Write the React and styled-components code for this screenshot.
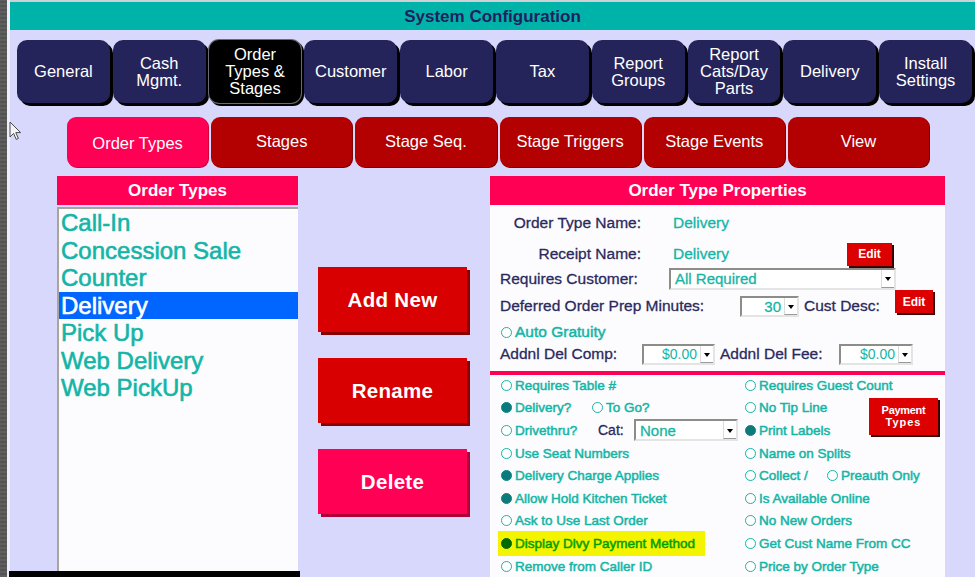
import React from 'react';
import styled, { createGlobalStyle } from 'styled-components';

const GlobalStyle = createGlobalStyle`
  html, body {
    margin: 0;
    padding: 0;
  }
  body {
    background: #d8d8fc;
    font-family: "Liberation Sans", Arial, sans-serif;
    overflow: hidden;
  }
`;

const TEAL = '#14b5a6';
const NAVY = '#2a2a5c';
const PINK = '#ff0055';

const Screen = styled.div`
  position: relative;
  display: flex;
  width: 975px;
  height: 577px;
  overflow: hidden;
  background: #d8d8fc;
`;

const SideStrip = styled.div`
  width: 7px;
  flex-shrink: 0;
  background: repeating-linear-gradient(0deg, #5f5f5f 0 2px, #545454 2px 4px);
  border-right: 3px solid #eeeeff;
`;

const Main = styled.div`
  flex: 1;
  display: flex;
  flex-direction: column;
  min-width: 0;
`;

const TitleBar = styled.div`
  height: 28px;
  box-sizing: border-box;
  padding-top: 3px;
  border-top: 2px solid #cfcfd6;
  background: #00b3a8;
  color: #1f2060;
  font-size: 17px;
  font-weight: 700;
  line-height: 23px;
  text-align: center;
  height: 30px;
`;

const NavRow = styled.div`
  display: flex;
  gap: 3px;
  margin: 10px 3px 0 7px;
`;

const NavButton = styled.div`
  flex: 1;
  height: 63px;
  display: flex;
  align-items: center;
  justify-content: center;
  text-align: center;
  border-radius: 10px;
  background: ${p => (p.$active ? '#000' : '#25245a')};
  box-shadow: ${p => (p.$active ? '0 0 0 1px #6a6a70, 2px 2px 0 1px #000' : '3px 3px 0 #000')};
  color: #fff;
  font-size: 16.5px;
  line-height: 17px;
`;

const TabRow = styled.div`
  display: flex;
  gap: 3px;
  width: 862px;
  margin: 14px 0 0 57px;
`;

const Tab = styled.div`
  flex: 1;
  height: 50px;
  display: flex;
  align-items: center;
  justify-content: center;
  padding: ${p => (p.$active ? '3px 0 0' : '0 0 2px')};
  box-sizing: border-box;
  border-radius: 9px;
  background: ${p => (p.$active ? PINK : '#b30000')};
  box-shadow: 1px 1px 0 ${p => (p.$active ? '#d0003c' : '#800000')};
  color: #fff;
  font-size: 16.5px;
`;

const Content = styled.div`
  flex: 1;
  display: flex;
  margin-top: 9px;
  padding-left: 47px;
  min-height: 0;
`;

const LeftCol = styled.div`
  width: 241px;
  display: flex;
  flex-direction: column;
`;

const PanelHeader = styled.div`
  height: 29px;
  flex-shrink: 0;
  background: ${PINK};
  color: #fff;
  font-size: 17px;
  font-weight: 700;
  line-height: 29px;
  text-align: center;
`;

const ListBox = styled.div`
  flex: 1;
  margin-top: 2px;
  background: #fcfcff;
  border-top: 2px solid #a6a69e;
  border-left: 2px solid #a6a69e;
`;

const ListItem = styled.div`
  height: 27.5px;
  line-height: 27.5px;
  padding-left: 2px;
  font-size: 24px;
  color: ${p => (p.$selected ? '#fff' : TEAL)};
  -webkit-text-stroke: 0.6px ${p => (p.$selected ? '#fff' : TEAL)};
  background: ${p => (p.$selected ? '#0066ff' : 'transparent')};
  white-space: nowrap;
`;

const BottomBar = styled.div`
  height: 6px;
  flex-shrink: 0;
  width: 291px;
  margin-left: -48px;
  background: #000;
`;

const MidCol = styled.div`
  display: flex;
  flex-direction: column;
  gap: 26px;
  margin-left: 20px;
  padding-top: 91px;
`;

const ActionButton = styled.div`
  width: 149px;
  height: 65px;
  display: flex;
  align-items: center;
  justify-content: center;
  background: ${p => (p.$pink ? PINK : '#d80000')};
  box-shadow: 3px 3px 0 ${p => (p.$pink ? '#b0003a' : '#8a0000')};
  color: #fff;
  font-size: 20.5px;
  font-weight: 700;
  letter-spacing: 0.3px;
`;

const RightPanel = styled.div`
  width: 455px;
  margin-left: 23px;
  display: flex;
  flex-direction: column;
`;

const PropsBody = styled.div`
  flex: 1;
  display: flex;
  flex-direction: column;
  background: #fcfcff;
`;

const TopSection = styled.div`
  padding: 8px 0 0 10px;
`;

const Row = styled.div`
  display: flex;
  align-items: center;
  height: ${p => p.$h}px;
  margin-top: ${p => p.$mt || 0}px;
`;

const Label = styled.div`
  width: ${p => p.$w}px;
  flex-shrink: 0;
  margin-left: ${p => p.$ml || 0}px;
  text-align: ${p => (p.$right ? 'right' : 'left')};
  color: ${NAVY};
  font-size: 15.5px;
  -webkit-text-stroke: 0.3px ${NAVY};
  white-space: nowrap;
`;

const Value = styled.div`
  width: ${p => (p.$w ? `${p.$w}px` : 'auto')};
  margin-left: ${p => p.$ml || 0}px;
  color: ${TEAL};
  font-size: 15.5px;
  -webkit-text-stroke: 0.3px ${TEAL};
`;

const EditButton = styled.div`
  width: ${p => p.$w}px;
  height: 23px;
  flex-shrink: 0;
  align-self: ${p => (p.$top ? 'flex-start' : 'center')};
  display: flex;
  align-items: center;
  justify-content: center;
  background: #dc0000;
  box-shadow: 2px 2px 0 #3a0000;
  color: #fff;
  font-size: 12px;
  font-weight: 700;
`;

const SelectBox = styled.div`
  width: ${p => p.$w}px;
  height: ${p => p.$h || 21}px;
  flex-shrink: 0;
  box-sizing: border-box;
  display: flex;
  align-items: center;
  background: #fff;
  border: 2px solid;
  border-color: #8c8c88 #e4e4e4 #e4e4e4 #8c8c88;
`;

const SelectText = styled.div`
  flex: 1;
  padding: 0 3px 0 4px;
  text-align: ${p => (p.$right ? 'right' : 'left')};
  color: ${TEAL};
  font-size: ${p => p.$size || 15}px;
  -webkit-text-stroke: ${p => (p.$thin ? 0 : 0.3)}px ${TEAL};
  white-space: nowrap;
  overflow: hidden;
`;

const SelectArrow = styled.div`
  position: relative;
  width: 12px;
  align-self: stretch;
  border-left: 1px solid #dcdcdc;
  border-bottom: 1px solid #9a9a9a;

  &::after {
    content: '';
    position: absolute;
    left: 3px;
    top: 50%;
    margin-top: -1px;
    border-left: 3px solid transparent;
    border-right: 3px solid transparent;
    border-top: 4px solid #000;
  }
`;

const Separator = styled.div`
  height: 4px;
  margin-top: 6px;
  background: ${PINK};
`;

const OptionGrid = styled.div`
  display: grid;
  grid-template-columns: 244px 123px 69px;
  grid-auto-rows: 22.6px;
  margin-top: -1px;
  padding-left: 12px;
`;

const Cell = styled.div`
  grid-column: ${p => p.$col};
  display: flex;
  align-items: center;
  white-space: nowrap;
`;

const RadioItem = styled.div`
  display: flex;
  align-items: center;
  width: ${p => (p.$w ? `${p.$w}px` : 'auto')};
  flex-shrink: 0;
  color: ${TEAL};
  font-size: ${p => p.$size || 13.5}px;
  -webkit-text-stroke: 0.5px ${TEAL};
  white-space: nowrap;
`;

const Radio = styled.span`
  width: 11px;
  height: 11px;
  box-sizing: border-box;
  flex-shrink: 0;
  margin-right: 3px;
  margin-left: -1px;
  border-radius: 50%;
  border: 1.5px solid ${p => (p.$on ? '#0a8686' : TEAL)};
  background: ${p => (p.$on ? '#0b7a7a' : '#fff')};
`;

const Highlight = styled.div`
  display: flex;
  align-items: center;
  height: 25px;
  margin-left: -4px;
  padding: 0 10px 0 4px;
  background: #f4f400;
  color: #00a000;
  font-size: 13.5px;
  -webkit-text-stroke: 0.5px #00a000;
`;

const GreenRadio = styled(Radio)`
  border-color: #006a00;
  background: #006a00;
`;

const CatLabel = styled.div`
  width: 36px;
  flex-shrink: 0;
  color: ${NAVY};
  font-size: 14px;
  -webkit-text-stroke: 0.3px ${NAVY};
`;

const PaymentButton = styled.div`
  grid-column: 3;
  grid-row: 2 / span 2;
  align-self: start;
  margin-top: 1px;
  height: 37px;
  display: flex;
  flex-direction: column;
  align-items: center;
  justify-content: center;
  background: #dc0000;
  box-shadow: 2px 2px 0 #3a0000;
  color: #fff;
  font-size: 11px;
  font-weight: 700;
  line-height: 12px;
  letter-spacing: -0.3px;
`;

const Cursor = styled.svg`
  position: absolute;
  left: 9px;
  top: 121px;
`;

const navItems = [
  ['General'],
  ['Cash', 'Mgmt.'],
  ['Order', 'Types &', 'Stages'],
  ['Customer'],
  ['Labor'],
  ['Tax'],
  ['Report', 'Groups'],
  ['Report', 'Cats/Day', 'Parts'],
  ['Delivery'],
  ['Install', 'Settings'],
];

const tabs = ['Order Types', 'Stages', 'Stage Seq.', 'Stage Triggers', 'Stage Events', 'View'];

const orderTypes = ['Call-In', 'Concession Sale', 'Counter', 'Delivery', 'Pick Up', 'Web Delivery', 'Web PickUp'];

const Select = ({ w, h, text, right, size, thin }) => (
  <SelectBox $w={w} $h={h}>
    <SelectText $right={right} $size={size} $thin={thin}>{text}</SelectText>
    <SelectArrow />
  </SelectBox>
);

const Option = ({ on, w, children }) => (
  <RadioItem $w={w}>
    <Radio $on={on} />
    {children}
  </RadioItem>
);

export default function App() {
  return (
    <>
      <GlobalStyle />
      <Screen>
        <SideStrip />
        <Main>
          <TitleBar>System Configuration</TitleBar>
          <NavRow>
            {navItems.map((lines, i) => (
              <NavButton key={i} $active={i === 2}>
                <div>
                  {lines.map(l => (
                    <div key={l}>{l}</div>
                  ))}
                </div>
              </NavButton>
            ))}
          </NavRow>
          <TabRow>
            {tabs.map((t, i) => (
              <Tab key={t} $active={i === 0}>{t}</Tab>
            ))}
          </TabRow>
          <Content>
            <LeftCol>
              <PanelHeader>Order Types</PanelHeader>
              <ListBox>
                {orderTypes.map(t => (
                  <ListItem key={t} $selected={t === 'Delivery'}>{t}</ListItem>
                ))}
              </ListBox>
              <BottomBar />
            </LeftCol>
            <MidCol>
              <ActionButton>Add New</ActionButton>
              <ActionButton>Rename</ActionButton>
              <ActionButton $pink>Delete</ActionButton>
            </MidCol>
            <RightPanel>
              <PanelHeader>Order Type Properties</PanelHeader>
              <PropsBody>
                <TopSection>
                  <Row $h={20}>
                    <Label $w={141} $right>Order Type Name:</Label>
                    <Value $ml={32}>Delivery</Value>
                  </Row>
                  <Row $h={24} $mt={9}>
                    <Label $w={141} $right>Receipt Name:</Label>
                    <Value $ml={32} $w={174}>Delivery</Value>
                    <EditButton $w={45}>Edit</EditButton>
                  </Row>
                  <Row $h={23} $mt={1}>
                    <Label $w={169}>Requires Customer:</Label>
                    <Select w={227} h={22} text="All Required" />
                  </Row>
                  <Row $h={32}>
                    <Label $w={240}>Deferred Order Prep Minutes:</Label>
                    <Select w={59} h={21} text="30" right />
                    <Label $w={91} $ml={5}>Cust Desc:</Label>
                    <EditButton $w={38} $top>Edit</EditButton>
                  </Row>
                  <Row $h={20}>
                    <RadioItem $size={15.5} style={{ marginLeft: 2 }}>
                      <Radio />
                      Auto Gratuity
                    </RadioItem>
                  </Row>
                  <Row $h={22} $mt={1}>
                    <Label $w={142}>Addnl Del Comp:</Label>
                    <Select w={73} h={21} text="$0.00" right size={14} thin />
                    <Label $w={119} $ml={5}>Addnl Del Fee:</Label>
                    <Select w={74} h={21} text="$0.00" right size={14} thin />
                  </Row>
                </TopSection>
                <Separator />
                <OptionGrid>
                  <PaymentButton>
                    <span>Payment</span>
                    <span style={{ letterSpacing: '1px' }}>Types</span>
                  </PaymentButton>

                  <Cell $col={1}><Option>Requires Table #</Option></Cell>
                  <Cell $col={2}><Option>Requires Guest Count</Option></Cell>

                  <Cell $col={1}>
                    <Option on w={91}>Delivery?</Option>
                    <Option>To Go?</Option>
                  </Cell>
                  <Cell $col={2}><Option>No Tip Line</Option></Cell>

                  <Cell $col={1}>
                    <Option w={96}>Drivethru?</Option>
                    <CatLabel>Cat:</CatLabel>
                    <Select w={104} h={22} text="None" />
                  </Cell>
                  <Cell $col={2}><Option on>Print Labels</Option></Cell>

                  <Cell $col={1}><Option>Use Seat Numbers</Option></Cell>
                  <Cell $col={2}><Option>Name on Splits</Option></Cell>

                  <Cell $col={1}><Option on>Delivery Charge Applies</Option></Cell>
                  <Cell $col={2}>
                    <Option w={82}>Collect /</Option>
                    <Option>Preauth Only</Option>
                  </Cell>

                  <Cell $col={1}><Option on>Allow Hold Kitchen Ticket</Option></Cell>
                  <Cell $col={2}><Option>Is Available Online</Option></Cell>

                  <Cell $col={1}><Option>Ask to Use Last Order</Option></Cell>
                  <Cell $col={2}><Option>No New Orders</Option></Cell>

                  <Cell $col={1}>
                    <Highlight>
                      <GreenRadio $on />
                      Display Dlvy Payment Method
                    </Highlight>
                  </Cell>
                  <Cell $col={2}><Option>Get Cust Name From CC</Option></Cell>

                  <Cell $col={1}><Option>Remove from Caller ID</Option></Cell>
                  <Cell $col={2}><Option>Price by Order Type</Option></Cell>
                </OptionGrid>
              </PropsBody>
            </RightPanel>
          </Content>
        </Main>
        <Cursor width="13" height="20" viewBox="0 0 13 20">
          <path
            d="M1 1 L1 16 L4.6 12.4 L7.2 18.4 L9.4 17.4 L6.8 11.6 L11.6 11.6 Z"
            fill="#f4f4f4"
            stroke="#4a4a4a"
            strokeWidth="1"
            strokeLinejoin="round"
          />
        </Cursor>
      </Screen>
    </>
  );
}
